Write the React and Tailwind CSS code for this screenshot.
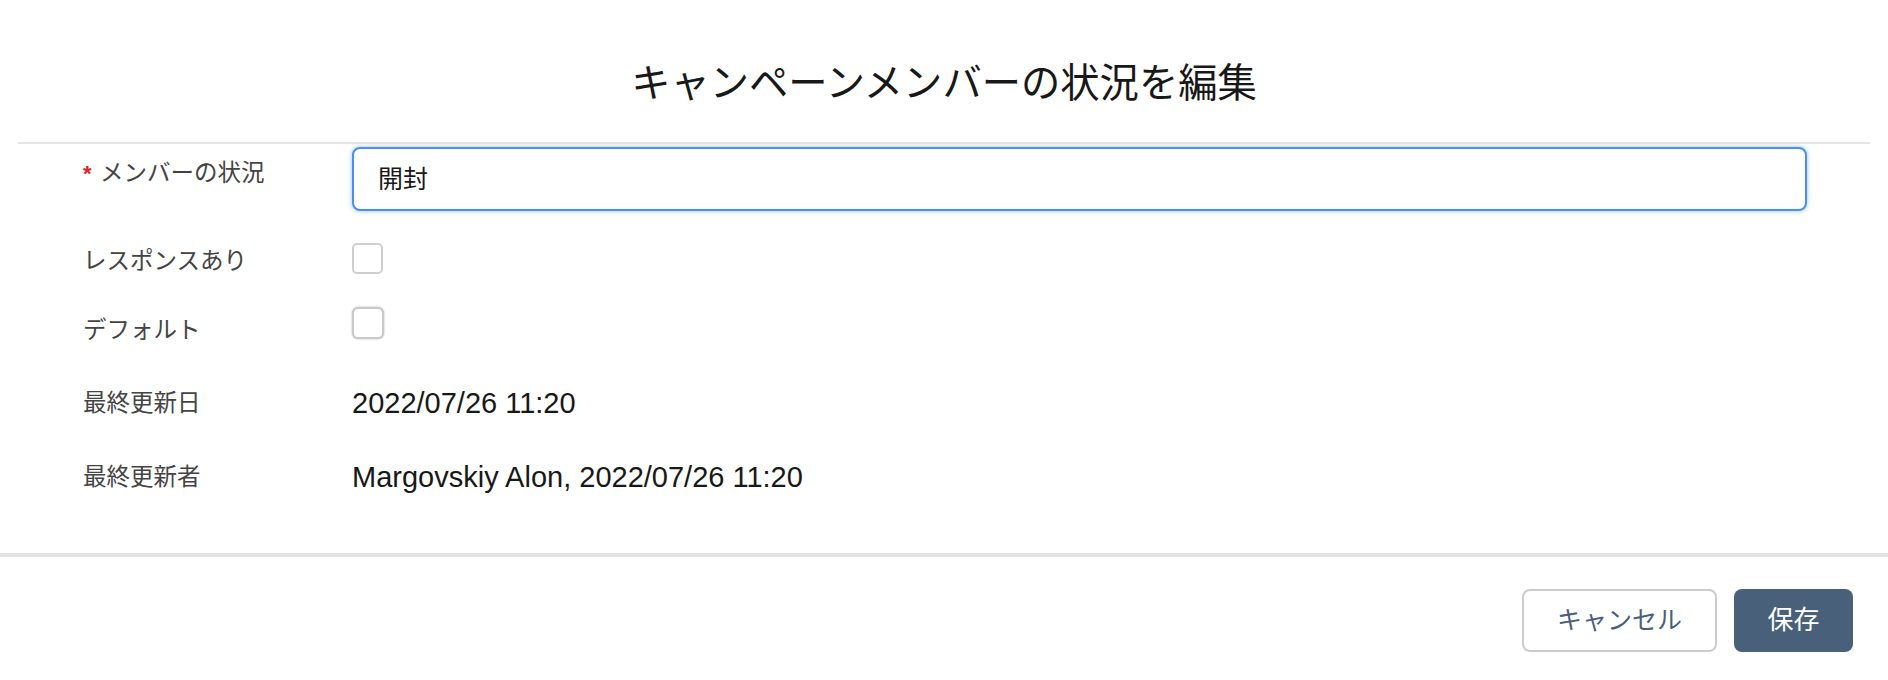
function FieldLabel({ children, required }) {
  return (
    <div className="w-[269px] shrink-0 text-[23.5px] leading-[28px] text-[#444444] flex items-center">
      {required && <span className="inline-block w-[17px] text-[#d8232a] text-[22px] leading-[20px] font-bold mt-[2px]">*</span>}
      <span>{children}</span>
    </div>
  )
}

function Checkbox({ focused }) {
  return (
    <span
      className={
        focused
          ? 'block w-[32px] h-[32px] rounded-[6px] border-2 border-[#c9c9c9] bg-white shadow-[0_0_2px_#b5b5b5]'
          : 'block w-[31px] h-[31px] rounded-[5px] border-2 border-[#cfcfcf] bg-white'
      }
    />
  )
}

export default function App() {
  return (
    <div className="w-full h-[680px] bg-white flex flex-col font-['Liberation_Sans','Noto_Sans_CJK_JP',sans-serif]">
      {/* header */}
      <div className="h-[142px] pt-[60px] shrink-0">
        <h1 className="text-center text-[39.3px] leading-[46px] text-[#181818] font-normal">
          キャンペーンメンバーの状況を編集
        </h1>
      </div>
      <div className="mx-[18px] h-[2px] bg-[#e5e5e5] shrink-0" />

      {/* body */}
      <div className="flex-1 pl-[83px] pr-[81px]">
        <div className="flex items-start mt-[3px]">
          <div className="pt-[12px]">
            <FieldLabel required>メンバーの状況</FieldLabel>
          </div>
          <div className="flex-1 h-[64px] rounded-[8px] border-2 border-[#4a8ff2] bg-white shadow-[0_0_5px_#9cc2f7] flex items-center pl-[24px] pt-[2px] text-[25px] text-[#181818]">
            開封
          </div>
        </div>

        <div className="flex items-center mt-[32px] h-[31px]">
          <div className="pt-[5px]">
            <FieldLabel>レスポンスあり</FieldLabel>
          </div>
          <Checkbox />
        </div>

        <div className="flex items-center mt-[33px] h-[32px]">
          <div className="pt-[14px]">
            <FieldLabel>デフォルト</FieldLabel>
          </div>
          <Checkbox focused />
        </div>

        <div className="flex items-center mt-[47px] h-[34px]">
          <FieldLabel>最終更新日</FieldLabel>
          <span className="text-[29px] leading-[34px] text-[#181818]">2022/07/26 11:20</span>
        </div>

        <div className="flex items-center mt-[40px] h-[34px]">
          <FieldLabel>最終更新者</FieldLabel>
          <span className="text-[29px] leading-[34px] text-[#181818]">Margovskiy Alon, 2022/07/26 11:20</span>
        </div>
      </div>

      {/* footer */}
      <div className="h-[127px] shrink-0 border-t-4 border-[#e4e4e4] pt-[32px] pr-[35px] flex justify-end items-start gap-[17px]">
        <button type="button" className="w-[195px] h-[63px] rounded-[8px] border-2 border-[#cccccc] bg-white text-[25px] text-[#486079]">
          キャンセル
        </button>
        <button type="button" className="w-[119px] h-[63px] rounded-[8px] bg-[#486079] text-[26px] text-white">
          保存
        </button>
      </div>
    </div>
  )
}
